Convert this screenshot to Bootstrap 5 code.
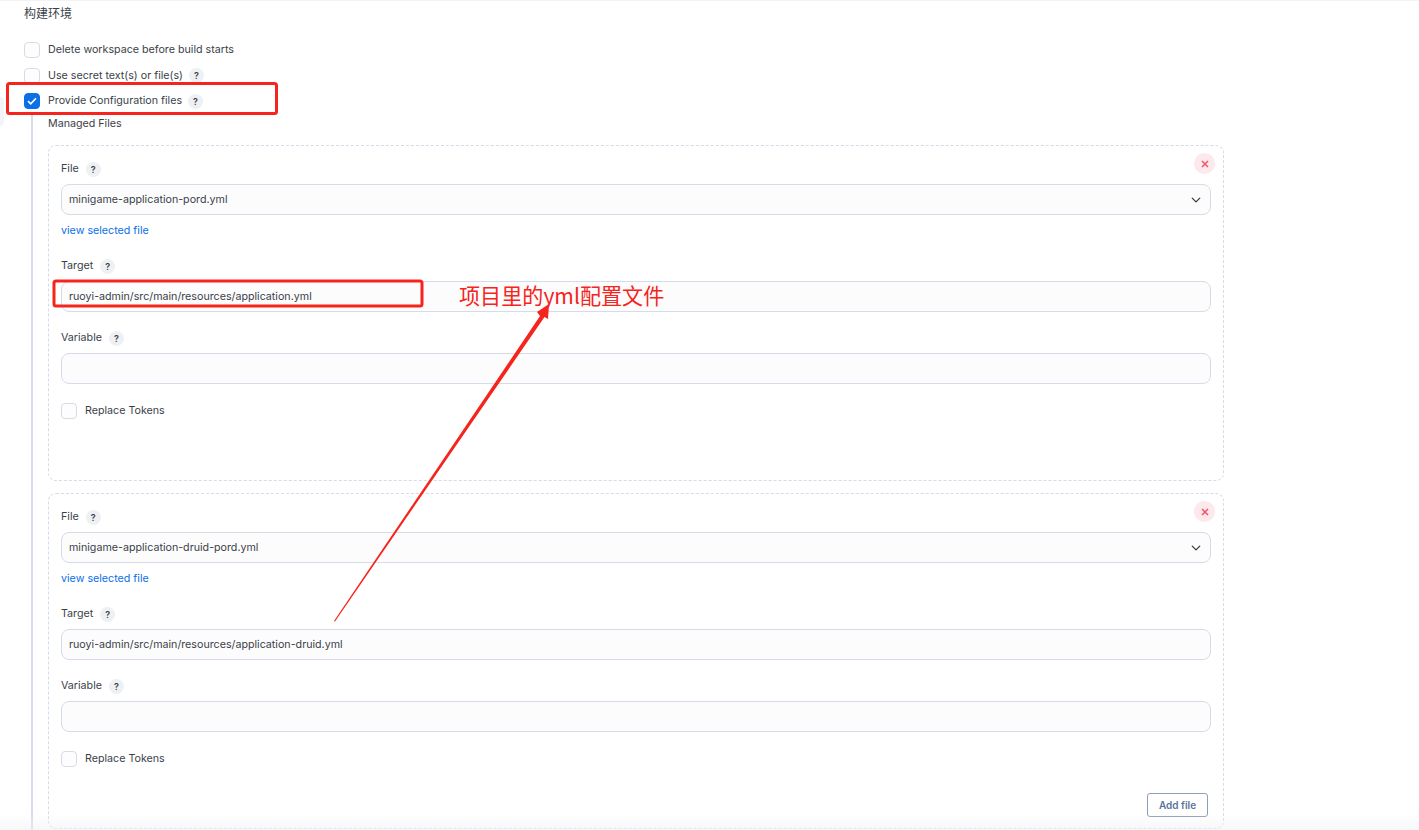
<!DOCTYPE html>
<html lang="zh-CN">
<head>
    <meta charset="UTF-8">
    <meta name="viewport" content="width=device-width, initial-scale=1.0">
    <title>构建环境</title>
    <link href="https://cdn.jsdelivr.net/npm/bootstrap@5.3.0/dist/css/bootstrap.min.css" rel="stylesheet">
    <script src="https://cdn.jsdelivr.net/npm/bootstrap@5.3.0/dist/js/bootstrap.bundle.min.js"></script>
    <style>
        html, body { height: 830px; overflow: hidden; }
        body {
            position: relative;
            font-family: Inter, "Noto Sans CJK SC", sans-serif;
            font-size: 10.7px;
            line-height: 16px;
            color: #3a3f49;
            background: #fff;
            border-top: 1px solid #f1f3f6;
        }
        .page-wrap { padding: 5px 0 0 24px; width: 1224px; }
        .page-title { font-size: 12px; line-height: 16px; margin-bottom: 20px; }
        .check-row { display: flex; align-items: center; height: 16px; gap: 8px; margin-bottom: 9.5px; }
        .check-box {
            width: 16px; height: 16px; flex: none; margin: 0;
            border: 1.5px solid #d5dbe7; border-radius: 4px; background: #fdfdfe;
            display: flex; align-items: center; justify-content: center;
        }
        .check-box.on { background: #0b6fe8; border-color: #0b6fe8; }
        .check-gap { gap: 6px; }
        .check-gap > span:nth-child(2) { margin-left: 2px; }
        .help-dot {
            display: inline-flex; align-items: center; justify-content: center;
            width: 15px; height: 15px; border-radius: 50%;
            background: #eef0f4; color: #3a3f49; font-size: 9px; font-weight: 600; line-height: 1;
        }
        .side-bump { position: absolute; left: 0; top: 96px; width: 4px; height: 29px; background: #f3f4f7; border-radius: 0 5px 5px 0; }
        .nested { border-left: 2px solid #d6dcea; margin: -1px 0 0 7px; padding: 4px 0 0 15px; height: 724px; }
        .nested-title { line-height: 16px; margin-bottom: 13px; }
        .file-box {
            position: relative;
            border: 1px dashed #d5dbe8; border-radius: 8px;
            padding: 15px 12px 0 12px; margin-bottom: 12px; height: 336px;
        }
        .field-label { display: flex; align-items: center; gap: 7px; height: 16px; margin-bottom: 7px; }
        .file-box .form-control, .file-box .form-select {
            height: 31px; padding: 0 7px; font-size: 10.7px; line-height: 29px; color: #3a3f49;
            background-color: #fdfcfd; border: 1px solid #d5dbe7; border-radius: 8px; box-shadow: none;
        }
        .file-box .form-select { background-position: right 8px center; background-size: 12px 10px; }
        .file-link { display: block; color: #0b6fe8; text-decoration: none; line-height: 16px; margin-top: 8px; margin-bottom: 19px; }
        .gap-field { margin-top: 18px; }
        .replace-row { margin-top: 19px; }
        .remove-btn {
            position: absolute; top: 7px; right: 8px; width: 21px; height: 21px; padding: 0;
            border: 0; border-radius: 50%; background: #fde8ec;
            display: flex; align-items: center; justify-content: center;
        }
        .add-btn {
            position: absolute; right: 15px; bottom: 11px; width: 61px; height: 24px; padding: 0;
            font-size: 10px; font-weight: 600; line-height: 1; color: #5a7499; background: #fff;
            border: 1px solid #8da0b5; border-radius: 3px;
        }
        .mark-layer { position: absolute; left: 0; top: 0; width: 1419px; height: 830px; pointer-events: none; }
        .note-text {
            position: absolute; left: 459px; top: 281px;
            font-family: "Noto Sans CJK SC", sans-serif; font-size: 21.1px; line-height: 26px; color: #f5241c; white-space: nowrap;
        }
        .bottom-fade { position: absolute; left: 0; right: 0; bottom: 0; height: 16px; background: linear-gradient(rgba(240,241,244,0), rgba(240,241,244,.55)); }
    </style>
</head>
<body>
    <div class="side-bump"></div>
    <div class="page-wrap">
        <div class="page-title">构建环境</div>
        <div class="check-row check-gap"><span class="check-box"></span><span>Delete workspace before build starts</span></div>
        <div class="check-row check-gap"><span class="check-box"></span><span>Use secret text(s) or file(s)</span><span class="help-dot">?</span></div>
        <div class="check-row check-gap mb-1">
            <span class="check-box on">
                <svg width="10" height="8" viewBox="0 0 10 8"><path d="M1 4.2 3.7 6.8 9 1.2" fill="none" stroke="#fff" stroke-width="1.6"/></svg>
            </span>
            <span>Provide Configuration files</span><span class="help-dot">?</span>
        </div>
        <div class="nested">
            <div class="nested-title">Managed Files</div>

            <div class="file-box">
                <button class="remove-btn" type="button" aria-label="remove">
                    <svg width="8" height="8" viewBox="0 0 8 8"><path d="M1 1 7 7M7 1 1 7" stroke="#f4506c" stroke-width="1.5"/></svg>
                </button>
                <div class="field-label"><span>File</span><span class="help-dot">?</span></div>
                <select class="form-select"><option>minigame-application-pord.yml</option></select>
                <a class="file-link" href="#">view selected file</a>
                <div class="field-label"><span>Target</span><span class="help-dot">?</span></div>
                <input class="form-control" type="text" value="ruoyi-admin/src/main/resources/application.yml">
                <div class="field-label gap-field"><span>Variable</span><span class="help-dot">?</span></div>
                <input class="form-control" type="text">
                <div class="check-row replace-row"><span class="check-box"></span><span>Replace Tokens</span></div>
            </div>

            <div class="file-box">
                <button class="remove-btn" type="button" aria-label="remove">
                    <svg width="8" height="8" viewBox="0 0 8 8"><path d="M1 1 7 7M7 1 1 7" stroke="#f4506c" stroke-width="1.5"/></svg>
                </button>
                <div class="field-label"><span>File</span><span class="help-dot">?</span></div>
                <select class="form-select"><option>minigame-application-druid-pord.yml</option></select>
                <a class="file-link" href="#">view selected file</a>
                <div class="field-label"><span>Target</span><span class="help-dot">?</span></div>
                <input class="form-control" type="text" value="ruoyi-admin/src/main/resources/application-druid.yml">
                <div class="field-label gap-field"><span>Variable</span><span class="help-dot">?</span></div>
                <input class="form-control" type="text">
                <div class="check-row replace-row"><span class="check-box"></span><span>Replace Tokens</span></div>
                <button class="add-btn" type="button">Add file</button>
            </div>
        </div>
    </div>

    <div class="bottom-fade"></div>

    <!-- annotations drawn over the screenshot -->
    <svg class="mark-layer" viewBox="0 0 1419 830">
        <rect x="7.5" y="82.5" width="269" height="30" rx="2" fill="none" stroke="#f5241c" stroke-width="3"/>
        <rect x="54" y="280" width="368" height="25" rx="2" fill="none" stroke="#f5241c" stroke-width="3"/>
        <path d="M334 620 L540 315 L537 311 L549 303 L548 318 L544.500 316 L335 620.500 Z" fill="#f5241c"/>
    </svg>
    <div class="note-text">项目里的yml配置文件</div>
</body>
</html>
